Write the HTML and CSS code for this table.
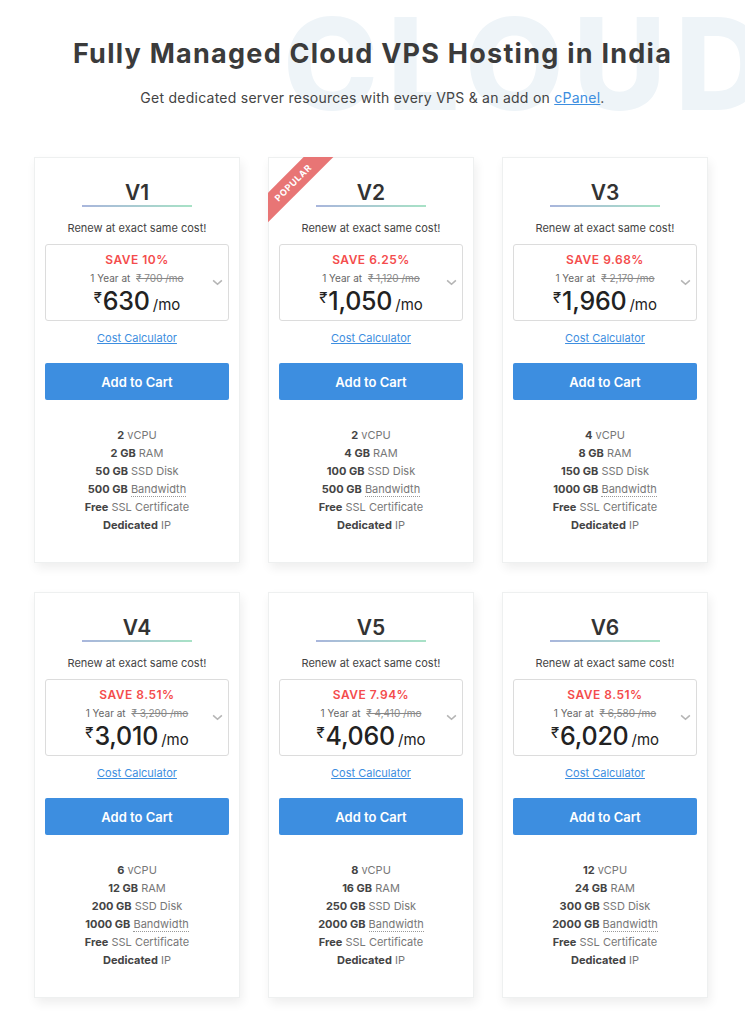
FILE: index.html
```html
<!DOCTYPE html>
<html lang="en">
<head>
<meta charset="utf-8">
<title>Fully Managed Cloud VPS Hosting in India</title>
<link rel="stylesheet" href="styles.css">
</head>
<body>
<div class="page">
  <header class="hero">
    <div class="watermark" aria-hidden="true">CLOUD</div>
    <h1 class="hero-title">Fully Managed Cloud VPS Hosting in India</h1>
    <p class="hero-sub">Get dedicated server resources with every VPS &amp; an add on <a href="#">cPanel</a>.</p>
  </header>

  <main class="grid">
    <!-- V1 -->
    <section class="card">
      <h2 class="plan">V1</h2>
      <p class="renew">Renew at exact same cost!</p>
      <div class="pricebox">
        <div class="save">SAVE 10%</div>
        <div class="was">1 Year at <s>₹ 700 /mo</s></div>
        <div class="price"><span class="cur">₹</span><span class="amt">630</span><span class="per">/mo</span></div>
        <svg class="chev" viewBox="0 0 12 8" width="11" height="7"><path d="M1 1.5 L6 6 L11 1.5" fill="none" stroke="#b5b5b5" stroke-width="1.8"/></svg>
      </div>
      <a class="calc" href="#">Cost Calculator</a>
      <button class="cart">Add to Cart</button>
      <ul class="feats">
        <li><b>2</b> vCPU</li>
        <li><b>2 GB</b> RAM</li>
        <li><b>50 GB</b> SSD Disk</li>
        <li><b>500 GB</b> <span class="dot">Bandwidth</span></li>
        <li><b>Free</b> SSL Certificate</li>
        <li><b>Dedicated</b> IP</li>
      </ul>
    </section>

    <!-- V2 -->
    <section class="card">
      <div class="ribbon"><span>POPULAR</span></div>
      <h2 class="plan">V2</h2>
      <p class="renew">Renew at exact same cost!</p>
      <div class="pricebox">
        <div class="save">SAVE 6.25%</div>
        <div class="was">1 Year at <s>₹ 1,120 /mo</s></div>
        <div class="price"><span class="cur">₹</span><span class="amt">1,050</span><span class="per">/mo</span></div>
        <svg class="chev" viewBox="0 0 12 8" width="11" height="7"><path d="M1 1.5 L6 6 L11 1.5" fill="none" stroke="#b5b5b5" stroke-width="1.8"/></svg>
      </div>
      <a class="calc" href="#">Cost Calculator</a>
      <button class="cart">Add to Cart</button>
      <ul class="feats">
        <li><b>2</b> vCPU</li>
        <li><b>4 GB</b> RAM</li>
        <li><b>100 GB</b> SSD Disk</li>
        <li><b>500 GB</b> <span class="dot">Bandwidth</span></li>
        <li><b>Free</b> SSL Certificate</li>
        <li><b>Dedicated</b> IP</li>
      </ul>
    </section>

    <!-- V3 -->
    <section class="card">
      <h2 class="plan">V3</h2>
      <p class="renew">Renew at exact same cost!</p>
      <div class="pricebox">
        <div class="save">SAVE 9.68%</div>
        <div class="was">1 Year at <s>₹ 2,170 /mo</s></div>
        <div class="price"><span class="cur">₹</span><span class="amt">1,960</span><span class="per">/mo</span></div>
        <svg class="chev" viewBox="0 0 12 8" width="11" height="7"><path d="M1 1.5 L6 6 L11 1.5" fill="none" stroke="#b5b5b5" stroke-width="1.8"/></svg>
      </div>
      <a class="calc" href="#">Cost Calculator</a>
      <button class="cart">Add to Cart</button>
      <ul class="feats">
        <li><b>4</b> vCPU</li>
        <li><b>8 GB</b> RAM</li>
        <li><b>150 GB</b> SSD Disk</li>
        <li><b>1000 GB</b> <span class="dot">Bandwidth</span></li>
        <li><b>Free</b> SSL Certificate</li>
        <li><b>Dedicated</b> IP</li>
      </ul>
    </section>

    <!-- V4 -->
    <section class="card">
      <h2 class="plan">V4</h2>
      <p class="renew">Renew at exact same cost!</p>
      <div class="pricebox">
        <div class="save">SAVE 8.51%</div>
        <div class="was">1 Year at <s>₹ 3,290 /mo</s></div>
        <div class="price"><span class="cur">₹</span><span class="amt">3,010</span><span class="per">/mo</span></div>
        <svg class="chev" viewBox="0 0 12 8" width="11" height="7"><path d="M1 1.5 L6 6 L11 1.5" fill="none" stroke="#b5b5b5" stroke-width="1.8"/></svg>
      </div>
      <a class="calc" href="#">Cost Calculator</a>
      <button class="cart">Add to Cart</button>
      <ul class="feats">
        <li><b>6</b> vCPU</li>
        <li><b>12 GB</b> RAM</li>
        <li><b>200 GB</b> SSD Disk</li>
        <li><b>1000 GB</b> <span class="dot">Bandwidth</span></li>
        <li><b>Free</b> SSL Certificate</li>
        <li><b>Dedicated</b> IP</li>
      </ul>
    </section>

    <!-- V5 -->
    <section class="card">
      <h2 class="plan">V5</h2>
      <p class="renew">Renew at exact same cost!</p>
      <div class="pricebox">
        <div class="save">SAVE 7.94%</div>
        <div class="was">1 Year at <s>₹ 4,410 /mo</s></div>
        <div class="price"><span class="cur">₹</span><span class="amt">4,060</span><span class="per">/mo</span></div>
        <svg class="chev" viewBox="0 0 12 8" width="11" height="7"><path d="M1 1.5 L6 6 L11 1.5" fill="none" stroke="#b5b5b5" stroke-width="1.8"/></svg>
      </div>
      <a class="calc" href="#">Cost Calculator</a>
      <button class="cart">Add to Cart</button>
      <ul class="feats">
        <li><b>8</b> vCPU</li>
        <li><b>16 GB</b> RAM</li>
        <li><b>250 GB</b> SSD Disk</li>
        <li><b>2000 GB</b> <span class="dot">Bandwidth</span></li>
        <li><b>Free</b> SSL Certificate</li>
        <li><b>Dedicated</b> IP</li>
      </ul>
    </section>

    <!-- V6 -->
    <section class="card">
      <h2 class="plan">V6</h2>
      <p class="renew">Renew at exact same cost!</p>
      <div class="pricebox">
        <div class="save">SAVE 8.51%</div>
        <div class="was">1 Year at <s>₹ 6,580 /mo</s></div>
        <div class="price"><span class="cur">₹</span><span class="amt">6,020</span><span class="per">/mo</span></div>
        <svg class="chev" viewBox="0 0 12 8" width="11" height="7"><path d="M1 1.5 L6 6 L11 1.5" fill="none" stroke="#b5b5b5" stroke-width="1.8"/></svg>
      </div>
      <a class="calc" href="#">Cost Calculator</a>
      <button class="cart">Add to Cart</button>
      <ul class="feats">
        <li><b>12</b> vCPU</li>
        <li><b>24 GB</b> RAM</li>
        <li><b>300 GB</b> SSD Disk</li>
        <li><b>2000 GB</b> <span class="dot">Bandwidth</span></li>
        <li><b>Free</b> SSL Certificate</li>
        <li><b>Dedicated</b> IP</li>
      </ul>
    </section>
  </main>
</div>
</body>
</html>
```

FILE: styles.css
```css
* { box-sizing: border-box; }

html, body {
  margin: 0;
  padding: 0;
  background: #ffffff;
}

body {
  font-family: Inter, "Open Sans", "DejaVu Sans", sans-serif;
  color: #333;
  overflow-x: hidden;
}

.page {
  width: 745px;
  height: 1024px;
  overflow: hidden;
  position: relative;
}

.hero {
  position: relative;
  text-align: center;
  padding-top: 36px;
  height: 157px;
}

.watermark {
  position: absolute;
  left: 283px;
  top: 0;
  font-size: 128px;
  font-weight: 800;
  letter-spacing: 9px;
  line-height: 1;
  color: #eef4f8;
  white-space: nowrap;
  z-index: 0;
  pointer-events: none;
}

.hero-title {
  position: relative;
  z-index: 1;
  margin: 0;
  font-size: 27px;
  line-height: 36px;
  font-weight: 700;
  color: #3b3b3b;
  letter-spacing: 1.25px;
}

.hero-sub {
  position: relative;
  z-index: 1;
  margin: 17px 0 0;
  font-size: 14px;
  line-height: 18px;
  color: #444;
  letter-spacing: 0.25px;
}

.hero-sub a {
  color: #3d8ee0;
  text-decoration: underline;
}

.grid {
  width: 674px;
  margin-left: 34px;
  display: grid;
  grid-template-columns: repeat(3, 206px);
  column-gap: 28px;
  row-gap: 29px;
}

.card {
  position: relative;
  height: 406px;
  background: #fff;
  border: 1px solid #eef0f0;
  box-shadow: 2px 5px 10px rgba(0, 0, 0, 0.07);
  padding: 23px 10px 0;
  display: flex;
  flex-direction: column;
  align-items: stretch;
  text-align: center;
}

.ribbon {
  position: absolute;
  top: -1px;
  left: -1px;
  width: 80px;
  height: 80px;
  overflow: hidden;
}

.ribbon span {
  position: absolute;
  left: -35px;
  top: 15px;
  width: 120px;
  height: 21px;
  line-height: 21px;
  background: #e87575;
  color: #fff;
  font-size: 9px;
  font-weight: 700;
  letter-spacing: 0.7px;
  text-align: center;
  transform: rotate(-45deg);
}

.plan {
  position: relative;
  align-self: center;
  width: 110px;
  margin: 0;
  padding-bottom: 2px;
  font-size: 21px;
  line-height: 23px;
  font-weight: 600;
  color: #333;
}

.plan::after {
  content: "";
  display: block;
  height: 2px;
  margin-top: 1px;
  background: linear-gradient(90deg, #a9b6dc, #a8e2c6);
}

.renew {
  margin: 11px 0 0;
  font-size: 11px;
  line-height: 16px;
  color: #444;
}

.pricebox {
  position: relative;
  margin-top: 8px;
  height: 77px;
  border: 1px solid #dcdcdc;
  border-radius: 3px;
  padding-top: 7px;
}

.save {
  font-size: 12px;
  line-height: 16px;
  font-weight: 600;
  color: #f44c4c;
  letter-spacing: 0.5px;
}

.was {
  margin-top: 2px;
  font-size: 10px;
  line-height: 16px;
  color: #666;
}

.was s {
  color: #888;
  margin-left: 3px;
}

.price {
  margin-top: 0;
  height: 30px;
  display: flex;
  justify-content: center;
  align-items: baseline;
  color: #222;
}

.cur {
  font-size: 15px;
  align-self: flex-start;
  margin-top: 2px;
  margin-right: 1px;
}

.amt {
  font-size: 25px;
  line-height: 30px;
  font-weight: 500;
  letter-spacing: -0.2px;
}

.per {
  font-size: 15px;
  margin-left: 3px;
}

.chev {
  position: absolute;
  right: 5px;
  top: 34px;
}

.calc {
  margin-top: 9px;
  font-size: 11px;
  line-height: 16px;
  color: #3d8ee0;
  text-decoration: underline;
  align-self: center;
}

.cart {
  margin-top: 17px;
  height: 37px;
  border: none;
  border-radius: 2px;
  background: #3d8ee0;
  color: #fff;
  font-family: inherit;
  font-size: 13px;
  font-weight: 600;
  cursor: pointer;
}

.feats {
  list-style: none;
  margin: 26px 0 0;
  padding: 0;
}

.feats li {
  font-size: 11px;
  line-height: 18px;
  color: #777;
}

.feats b {
  color: #444;
  font-weight: 700;
}

.dot {
  border-bottom: 1px dotted #999;
}
```
